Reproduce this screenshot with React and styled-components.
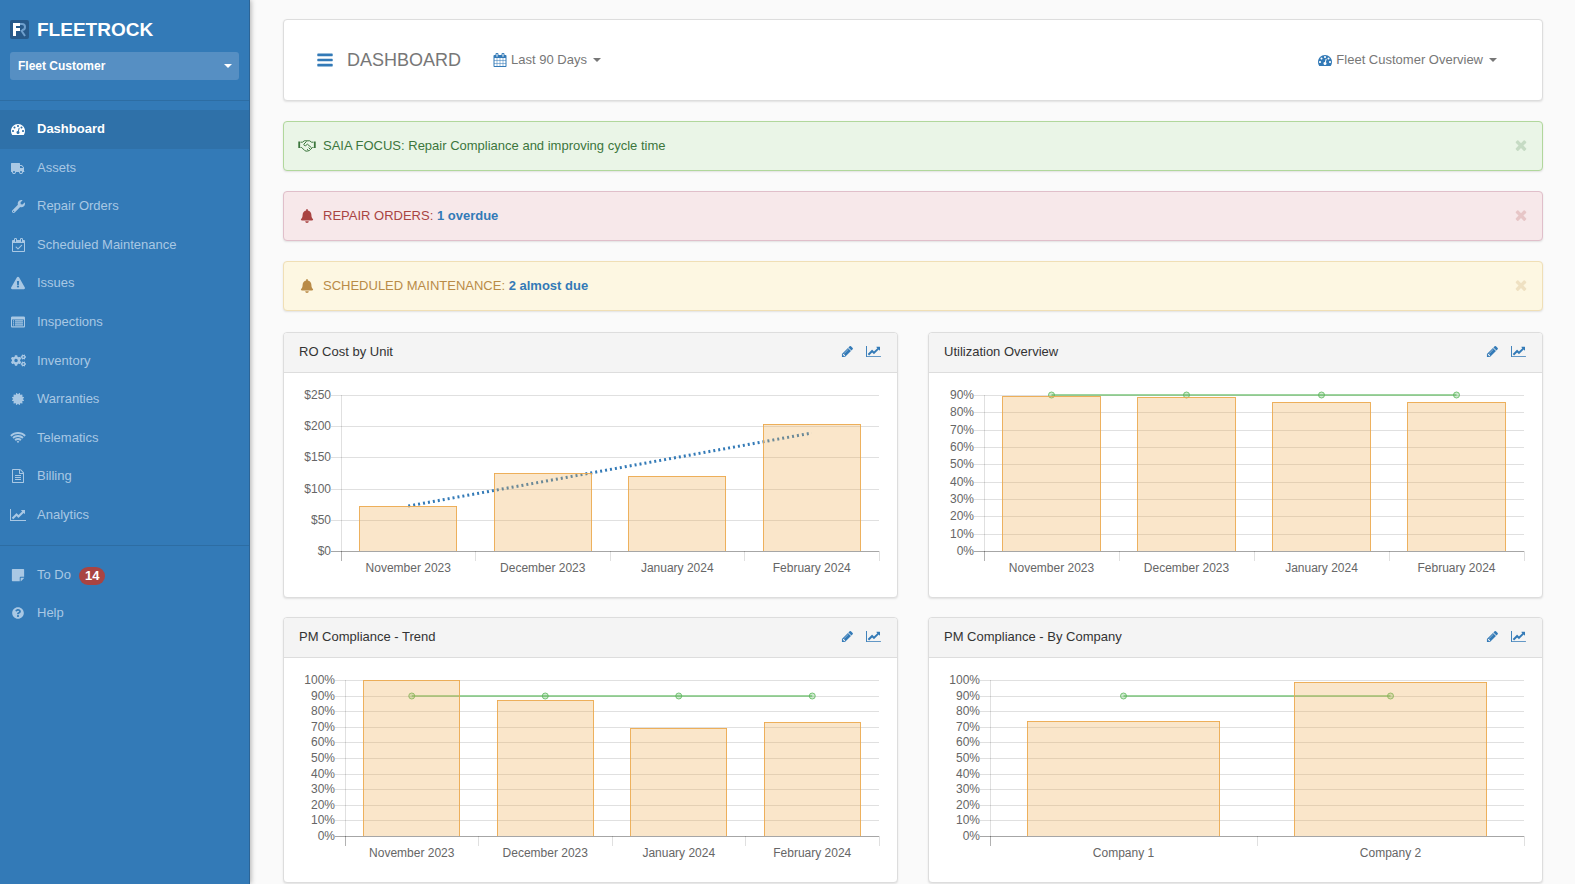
import React from "react";
import styled, { createGlobalStyle, css } from "styled-components";
import {
  FaWrench,
  FaExclamationTriangle,
  FaCogs,
  FaCertificate,
  FaStickyNote,
  FaQuestionCircle,
  FaBell,
} from "react-icons/fa";

const GlobalStyle = createGlobalStyle`
  *, *::before, *::after { box-sizing: border-box; }
  body {
    margin: 0;
    background: #fafafa;
    color: #333;
    font: 13px/18px "Liberation Sans", Arial, Helvetica, sans-serif;
  }
  button, select { font: inherit; }
  ul, h1, h2 { margin: 0; padding: 0; font-weight: normal; }
  ul { list-style: none; }
  a { text-decoration: none; }
`;

/* ---------- icons ---------- */

const PATHS = {
  bars: {
    w: 1792,
    d: "M1664 1344v128q0 26-19 45t-45 19h-1408q-26 0-45-19t-19-45v-128q0-26 19-45t45-19h1408q26 0 45 19t19 45zm0-512v128q0 26-19 45t-45 19h-1408q-26 0-45-19t-19-45v-128q0-26 19-45t45-19h1408q26 0 45 19t19 45zm0-512v128q0 26-19 45t-45 19h-1408q-26 0-45-19t-19-45v-128q0-26 19-45t45-19h1408q26 0 45 19t19 45z",
  },
  gauge: {
    w: 1792,
    d: "M384 1152q0-53-37.5-90.5t-90.5-37.5-90.5 37.5-37.5 90.5 37.5 90.5 90.5 37.5 90.5-37.5 37.5-90.5zm192-448q0-53-37.5-90.5t-90.5-37.5-90.5 37.5-37.5 90.5 37.5 90.5 90.5 37.5 90.5-37.5 37.5-90.5zm428 481l101-382q6-26-7.5-48.5t-38.5-29.5-48 6.5-30 39.5l-101 382q-60 5-107 43.5t-63 98.5q-20 77 20 146t117 89 146-20 89-117q16-60-6-117t-72-91zm660-33q0-53-37.5-90.5t-90.5-37.5-90.5 37.5-37.5 90.5 37.5 90.5 90.5 37.5 90.5-37.5 37.5-90.5zm-640-640q0-53-37.5-90.5t-90.5-37.5-90.5 37.5-37.5 90.5 37.5 90.5 90.5 37.5 90.5-37.5 37.5-90.5zm448 192q0-53-37.5-90.5t-90.5-37.5-90.5 37.5-37.5 90.5 37.5 90.5 90.5 37.5 90.5-37.5 37.5-90.5zm320 448q0 261-141 483-19 29-54 29h-1402q-35 0-54-29-141-221-141-483 0-182 71-348t191-286 286-191 348-71 348 71 286 191 191 286 71 348z",
  },
  truck: {
    w: 1792,
    flip: true,
    d: "M640 1408q0-52-38-90t-90-38-90 38-38 90 38 90 90 38 90-38 38-90zm-384-512h384v-256h-158q-13 0-22 9l-195 195q-9 9-9 22v30zm1280 512q0-52-38-90t-90-38-90 38-38 90 38 90 90 38 90-38 38-90zm256-1088v1024q0 15-4 26.5t-13.5 18.5-16.5 11.5-23.5 6-22.5 2-25.5 0-22.5-.5q0 106-75 181t-181 75-181-75-75-181h-384q0 106-75 181t-181 75-181-75-75-181h-64q-3 0-22.5.5t-25.5 0-22.5-2-23.5-6-16.5-11.5-13.5-18.5-4-26.5q0-26 19-45t45-19v-320q0-8-.5-35t0-38 2.5-34.5 6.5-37 14-30.5 22.5-30l198-198q19-19 50.5-32t58.5-13h160v-192q0-26 19-45t45-19h1024q26 0 45 19t19 45z",
  },
  calendarCheck: {
    w: 1664,
    d: "M1303 964l-512 512q-10 9-23 9t-23-9l-288-288q-9-10-9-23t9-22l46-46q9-9 22-9t23 9l220 220 444-444q10-9 23-9t22 9l46 46q9 9 9 22t-9 23zm-1175 700h1408v-1024h-1408v1024zm384-1216v-288q0-14-9-23t-23-9h-64q-14 0-23 9t-9 23v288q0 14 9 23t23 9h64q14 0 23-9t9-23zm768 0v-288q0-14-9-23t-23-9h-64q-14 0-23 9t-9 23v288q0 14 9 23t23 9h64q14 0 23-9t9-23zm384-64v1280q0 52-38 90t-90 38h-1408q-52 0-90-38t-38-90v-1280q0-52 38-90t90-38h128v-96q0-66 47-113t113-47h64q66 0 113 47t47 113v96h384v-96q0-66 47-113t113-47h64q66 0 113 47t47 113v96h128q52 0 90 38t38 90z",
  },
  calendar: {
    w: 1792,
    d: "M192 1664h288v-288h-288v288zm352 0h320v-288h-320v288zm-352-352h288v-320h-288v320zm352 0h320v-320h-320v320zm-352-384h288v-288h-288v288zm736 736h320v-288h-320v288zm-384-736h320v-288h-320v288zm768 736h288v-288h-288v288zm-384-352h320v-320h-320v320zm-352-864v-288q0-13-9.500-22.500t-22.500-9.500h-64q-13 0-22.500 9.500t-9.500 22.500v288q0 13 9.500 22.500t22.500 9.500h64q13 0 22.500-9.500t9.500-22.500zm736 864h288v-320h-288v320zm-384-384h320v-288h-320v288zm384 0h288v-288h-288v288zm32-480v-288q0-13-9.500-22.500t-22.500-9.500h-64q-13 0-22.500 9.500t-9.500 22.500v288q0 13 9.500 22.500t22.500 9.500h64q13 0 22.500-9.500t9.500-22.500zm384-64v1280q0 52-38 90t-90 38h-1408q-52 0-90-38t-38-90v-1280q0-52 38-90t90-38h128v-96q0-66 47-113t113-47h64q66 0 113 47t47 113v96h384v-96q0-66 47-113t113-47h64q66 0 113 47t47 113v96h128q52 0 90 38t38 90z",
  },
  list: {
    w: 1792,
    d: "M160 192h1472q66 0 113 47t47 113v1088q0 66-47 113t-113 47h-1472q-66 0-113-47t-47-113v-1088q0-66 47-113t113-47zm-32 384v832q0 32 32 32h1472q32 0 32-32v-832zm128 96h128v160h-128zm256 0h1024v160h-1024zm-256 256h128v160h-128zm256 0h1024v160h-1024zm-256 256h128v160h-128zm256 0h1024v160h-1024z",
    evenOdd: true,
  },
  wifi: {
    w: 2048,
    d: "M1024 1523q-20 0-93-73.5t-73-93.5q0-32 62.5-54t103.5-22 103.5 22 62.5 54q0 20-73 93.5t-93 73.5zm270-271q-2 0-40-25t-101.5-50-128.5-25-128.5 25-101 50-40.5 25q-18 0-93.5-75t-75.5-93q0-13 10-23 78-77 196-121t233-44 233 44 196 121q10 10 10 23 0 18-75.5 93t-93.5 75zm273-272q-11 0-23-8-136-105-252-154.5t-268-49.5q-85 0-170.5 22t-149 53-113.500 62-79 53-31 22q-17 0-92-75t-75-93q0-12 10-22 132-132 320-205t380-73 380 73 320 205q10 10 10 22 0 18-75 93t-92 75zm271-271q-11 0-22-9-179-157-371.500-236.500t-420.500-79.500-420.500 79.500-371.500 236.500q-11 9-22 9-17 0-92.500-75t-75.500-93q0-13 10-23 187-186 445-288t527-102 527 102 445 288q10 10 10 23 0 18-75.500 93t-92.500 75z",
  },
  file: {
    w: 1792,
    d: "M1596 380q28 28 48 76t20 88v1152q0 40-28 68t-68 28h-1344q-40 0-68-28t-28-68v-1600q0-40 28-68t68-28h896q40 0 88 20t76 48zm-444-244v376h376q-10-29-22-41l-313-313q-12-12-41-22zm384 1528v-1024h-416q-40 0-68-28t-28-68v-416h-768v1536h1280zm-1024-864q0-14 9-23t23-9h704q14 0 23 9t9 23v64q0 14-9 23t-23 9h-704q-14 0-23-9t-9-23v-64zm736 224q14 0 23 9t9 23v64q0 14-9 23t-23 9h-704q-14 0-23-9t-9-23v-64q0-14 9-23t23-9h704zm0 256q14 0 23 9t9 23v64q0 14-9 23t-23 9h-704q-14 0-23-9t-9-23v-64q0-14 9-23t23-9h704z",
  },
  lineChart: {
    w: 2048,
    d: "M2048 1536v128h-2048v-1536h128v1408h1920zm-128-1248v435q0 21-19.500 29.500t-35.500-7.500l-121-121-633 633q-10 10-23 10t-23-10l-233-233-416 416-192-192 585-585q10-10 23-10t23 10l233 233 464-464-121-121q-16-16-7.500-35.500t29.500-19.500h435q14 0 23 9t9 23z",
  },
  pencil: {
    w: 1792,
    d: "M491 1536l91-91-235-235-91 91v107h128v128h107zm523-928q0-22-22-22-10 0-17 7l-542 542q-7 7-7 17 0 22 22 22 10 0 17-7l542-542q7-7 7-17zm-54-192l416 416-832 832h-416v-416zm683 96q0 53-37 90l-166 166-416-416 166-165q36-38 90-38 53 0 91 38l235 234q37 39 37 91z",
  },
  close: {
    w: 1792,
    d: "M1490 1322q0 40-28 68l-136 136q-28 28-68 28t-68-28l-294-294-294 294q-28 28-68 28t-68-28l-136-136q-28-28-28-68t28-68l294-294-294-294q-28-28-28-68t28-68l136-136q28-28 68-28t68 28l294 294 294-294q28-28 68-28t68 28l136 136q28 28 28 68t-28 68l-294 294 294 294q28 28 28 68z",
  },
};

function Glyph({ name, size = 14 }) {
  const { w, d, flip, evenOdd } = PATHS[name];
  return (
    <svg
      viewBox={`0 0 ${w} 1792`}
      width={Math.round((size * w) / 1792)}
      height={size}
      fill="currentColor"
      aria-hidden="true"
    >
      <path
        d={d}
        fillRule={evenOdd ? "evenodd" : "nonzero"}
        transform={flip ? `translate(${w} 0) scale(-1 1)` : undefined}
      />
    </svg>
  );
}

function Handshake() {
  return (
    <svg width="18" height="12" viewBox="0 0 18 12" fill="none" stroke="currentColor" aria-hidden="true">
      <path d="M1.200 1.500v6.500M16.800 1.500v6.500" strokeWidth="1.800" />
      <path
        d="M2.500 2.200h2l1.800-1.400h5.400l1.800 1.400h2M2.500 7.500h1.200l3 3q1.400 1 2.600.6 2.600-.3 3.600-2l1.600-1.600h1M8.600 1.400l-2.800 2.800q0 1.700 1.800 1.500l1.800-1.500 4.200 3.600M9 9.200l1.300 1.200M10.600 7.600l1.600 1.600"
        strokeWidth="1"
        strokeLinejoin="round"
      />
    </svg>
  );
}

function Logo() {
  return (
    <svg width="19" height="19" viewBox="0 0 19 19" aria-hidden="true">
      <rect width="19" height="19" rx="2" fill="#27598a" />
      <g fill="none" stroke="#6f9fcd" strokeWidth="2">
        <path d="M8 4h4q3 0 3 3t-3 3" />
        <path d="M11 10l4 6" />
      </g>
      <g fill="#fff">
        <rect x="3" y="3" width="3" height="13" />
        <rect x="6" y="3" width="4" height="3" />
        <rect x="6" y="8" width="4" height="3" />
      </g>
    </svg>
  );
}

const Caret = styled.span`
  width: 0;
  height: 0;
  border: 4px solid transparent;
  border-top-color: currentColor;
  border-bottom-width: 0;
`;

/* ---------- sidebar ---------- */

const Page = styled.div`
  display: flex;
  min-height: 100vh;
`;

const Sidebar = styled.aside`
  flex: 0 0 250px;
  background: #337ab7;
  border-right: 1px solid #2c6496;
  box-shadow: 1px 0 5px rgba(0, 0, 0, 0.3);
`;

const Brand = styled.a`
  display: flex;
  align-items: center;
  gap: 8px;
  height: 52px;
  padding: 7px 10px 0;
  color: #fff;
  font-size: 19px;
  font-weight: bold;
`;

const CompanyPicker = styled.label`
  position: relative;
  display: block;
  margin: 0 10px 20px;
  color: #fff;
`;

const CompanySelect = styled.select`
  appearance: none;
  display: block;
  width: 100%;
  height: 28px;
  padding: 0 24px 0 8px;
  border: 0;
  border-radius: 3px;
  background: #568fc3;
  color: #fff;
  font-size: 12px;
  font-weight: bold;
`;

const PickerCaret = styled(Caret)`
  position: absolute;
  right: 7px;
  top: 12px;
  pointer-events: none;
`;

const NavGroup = styled.ul`
  display: flex;
  flex-direction: column;
  min-height: ${(p) => p.$height}px;
  padding: 9px 0 11px;
  border-top: 1px solid #2d6da3;
`;

const NavItem = styled.li`
  flex: 1;
  display: flex;
`;

const NavLink = styled.a`
  flex: 1;
  display: flex;
  align-items: center;
  padding-left: 10px;
  color: #a9c8e4;
  ${(p) =>
    p.$active &&
    css`
      background: #2f71a9;
      color: #fff;
      font-weight: bold;
    `}
`;

const NavIcon = styled.span`
  display: flex;
  justify-content: center;
  width: 16px;
  margin-right: 11px;
`;

const Badge = styled.span`
  margin: 2px 0 0 8px;
  padding: 0 6px;
  border-radius: 9px;
  background: #a94442;
  color: #fff;
  font-weight: bold;
`;

const MAIN_NAV = [
  ["Dashboard", <Glyph name="gauge" />],
  ["Assets", <Glyph name="truck" />],
  ["Repair Orders", <FaWrench size={13} />],
  ["Scheduled Maintenance", <Glyph name="calendarCheck" />],
  ["Issues", <FaExclamationTriangle size={14} />],
  ["Inspections", <Glyph name="list" />],
  ["Inventory", <FaCogs size={15} />],
  ["Warranties", <FaCertificate size={12} />],
  ["Telematics", <Glyph name="wifi" />],
  ["Billing", <Glyph name="file" />],
  ["Analytics", <Glyph name="lineChart" />],
];

const HELP_NAV = [
  ["To Do", <FaStickyNote size={14} />, 14],
  ["Help", <FaQuestionCircle size={12} />],
];

function Nav({ items, active, height }) {
  return (
    <NavGroup $height={height}>
      {items.map(([label, icon, count]) => (
        <NavItem key={label}>
          <NavLink href="#" $active={label === active}>
            <NavIcon>{icon}</NavIcon>
            {label}
            {count && <Badge>{count}</Badge>}
          </NavLink>
        </NavItem>
      ))}
    </NavGroup>
  );
}

/* ---------- main column ---------- */

const Main = styled.main`
  flex: 1;
  min-width: 0;
  padding: 19px 32px 0 33px;
`;

const TopBar = styled.header`
  display: flex;
  align-items: center;
  height: 82px;
  margin-bottom: 20px;
  padding: 0 45px 0 32px;
  background: #fff;
  border: 1px solid #ddd;
  border-radius: 4px;
  box-shadow: 0 1px 2px rgba(0, 0, 0, 0.1);
`;

const IconButton = styled.button`
  display: flex;
  padding: 0;
  border: 0;
  background: none;
  color: #337ab7;
  cursor: pointer;
`;

const Title = styled.h1`
  margin: 0 32px 0 13px;
  color: #777;
  font-size: 18px;
`;

const Dropdown = styled.button`
  display: flex;
  align-items: center;
  gap: 4px;
  padding: 0;
  border: 0;
  background: none;
  color: #777;
  cursor: pointer;
  margin-left: ${(p) => (p.$end ? "auto" : "0")};

  svg {
    color: #337ab7;
  }

  ${Caret} {
    margin-left: 2px;
  }
`;

const TONES = {
  success: { bg: "#eaf5e7", line: "#b1d79c", text: "#3c763d" },
  danger: { bg: "#f7e8ea", line: "#e0bfca", text: "#a94442" },
  warning: { bg: "#fdf7e2", line: "#f0dfb6", text: "#b98b47" },
};

const Alert = styled.div`
  display: flex;
  align-items: center;
  height: 50px;
  margin-bottom: 20px;
  padding: 0 13px 0 14px;
  background: ${(p) => TONES[p.$tone].bg};
  border: 1px solid ${(p) => TONES[p.$tone].line};
  border-radius: 4px;
  box-shadow: 0 1px 2px rgba(0, 0, 0, 0.1);
  color: ${(p) => TONES[p.$tone].text};
`;

const AlertIcon = styled.span`
  display: flex;
  justify-content: center;
  width: 18px;
  margin-right: 7px;
`;

const AlertText = styled.span`
  flex: 1;
`;

const AlertLink = styled.a`
  color: #337ab7;
  font-weight: bold;
`;

const Dismiss = styled(IconButton)`
  padding-bottom: 2px;
  color: inherit;
  opacity: 0.2;
`;

const Cards = styled.div`
  display: grid;
  grid-template-columns: repeat(2, minmax(0, 1fr));
  gap: 19px 30px;
  padding-top: 1px;
`;

const Card = styled.section`
  background: #fff;
  border: 1px solid #ddd;
  border-radius: 4px;
  box-shadow: 0 1px 2px rgba(0, 0, 0, 0.1);
`;

const CardHead = styled.div`
  display: flex;
  align-items: center;
  gap: 12px;
  height: 40px;
  padding: 0 16px 2px 15px;
  background: #f4f4f4;
  border-bottom: 1px solid #ddd;
  border-radius: 3px 3px 0 0;
`;

const CardTitle = styled.h2`
  flex: 1;
  font-size: 13px;
`;

/* ---------- charts ---------- */

const PLOT_HEIGHT = 156;

const ChartBody = styled.div`
  height: 224px;
  padding: 22px 18px 0 ${(p) => p.$axis}px;
`;

const Plot = styled.svg`
  display: block;
  width: 100%;
  height: ${PLOT_HEIGHT}px;
  overflow: visible;

  text {
    fill: #666;
    font-size: 12px;
  }
`;

function Chart({ chart }) {
  const { labels, values, max, step, format, target, trend, axis } = chart;
  const y = (v) => Math.round(PLOT_HEIGHT * (1 - v / max));
  const slot = 100 / labels.length;
  const mid = (i) => `${slot * (i + 0.5)}%`;
  const ticks = [];
  for (let v = 0; v <= max; v += step) ticks.push(v);

  return (
    <ChartBody $axis={axis}>
      <Plot role="img" aria-label={chart.title}>
        <g shapeRendering="crispEdges" stroke="#000" strokeOpacity="0.12">
          {ticks.map((v) => (
            <line key={v} x1="-10" x2="100%" y1={y(v)} y2={y(v)} strokeOpacity={v === 0 ? 0.35 : 0.12} />
          ))}
          <line x1="0" x2="0" y1="0" y2={PLOT_HEIGHT} />
          <line x1="0" x2="0" y1={PLOT_HEIGHT} y2={PLOT_HEIGHT + 10} strokeOpacity="0.3" />
          {labels.map((l, i) => (
            <line key={l} x1={`${slot * (i + 1)}%`} x2={`${slot * (i + 1)}%`} y1={PLOT_HEIGHT} y2={PLOT_HEIGHT + 10} />
          ))}
        </g>
        {target && (
          <g stroke="#5cb85c" strokeOpacity="0.8">
            <line x1={mid(0)} x2={mid(labels.length - 1)} y1={y(target)} y2={y(target)} strokeWidth="1.500" />
            {labels.map((l, i) => (
              <circle key={l} cx={mid(i)} cy={y(target)} r="3" fill="#5cb85c" fillOpacity="0.3" />
            ))}
          </g>
        )}
        {trend && (
          <line
            x1={mid(0)}
            x2={mid(labels.length - 1)}
            y1={y(trend[0])}
            y2={y(trend[1])}
            stroke="#337ab7"
            strokeWidth="3"
            strokeDasharray="2 3"
          />
        )}
        {values.map((v, i) => {
          const left = `${slot * (i + 0.14)}%`;
          const right = `${slot * (i + 0.86)}%`;
          return (
            <g key={labels[i]} stroke="#eba94e" strokeOpacity="0.9">
              <rect
                x={left}
                y={y(v)}
                width={`${slot * 0.72}%`}
                height={PLOT_HEIGHT - y(v)}
                fill="#f0ad4e"
                fillOpacity="0.3"
                stroke="none"
              />
              <g shapeRendering="crispEdges">
                <line x1={left} x2={left} y1={y(v)} y2={PLOT_HEIGHT} />
                <line x1={right} x2={right} y1={y(v)} y2={PLOT_HEIGHT} />
                <line x1={left} x2={right} y1={y(v)} y2={y(v)} />
              </g>
            </g>
          );
        })}
        {ticks.map((v) => (
          <text key={v} x="-10" y={y(v) + 4} textAnchor="end">
            {format(v)}
          </text>
        ))}
        {labels.map((l, i) => (
          <text key={l} x={mid(i)} y={PLOT_HEIGHT + 21} textAnchor="middle">
            {l}
          </text>
        ))}
      </Plot>
    </ChartBody>
  );
}

const MONTHS = ["November 2023", "December 2023", "January 2024", "February 2024"];
const percent = (v) => `${v}%`;

const CHARTS = [
  {
    title: "RO Cost by Unit",
    labels: MONTHS,
    values: [72, 125, 120, 204],
    trend: [72, 189],
    max: 250,
    step: 50,
    format: (v) => `$${v}`,
    axis: 57,
  },
  {
    title: "Utilization Overview",
    labels: MONTHS,
    values: [89.4, 89, 86, 86.2],
    target: 90,
    max: 90,
    step: 10,
    format: percent,
    axis: 55,
  },
  {
    title: "PM Compliance - Trend",
    labels: MONTHS,
    values: [100, 87.4, 69.3, 73],
    target: 90,
    max: 100,
    step: 10,
    format: percent,
    axis: 61,
  },
  {
    title: "PM Compliance - By Company",
    labels: ["Company 1", "Company 2"],
    values: [74, 98.8],
    target: 90,
    max: 100,
    step: 10,
    format: percent,
    axis: 61,
  },
];

export default function App() {
  return (
    <Page>
      <GlobalStyle />
      <Sidebar>
        <Brand href="#">
          <Logo />
          FLEETROCK
        </Brand>
        <CompanyPicker>
          <CompanySelect aria-label="Company" defaultValue="Fleet Customer">
            <option>Fleet Customer</option>
          </CompanySelect>
          <PickerCaret />
        </CompanyPicker>
        <nav>
          <Nav items={MAIN_NAV} active="Dashboard" height={445} />
          <Nav items={HELP_NAV} height={98} />
        </nav>
      </Sidebar>
      <Main>
        <TopBar>
          <IconButton type="button" aria-label="Toggle menu">
            <Glyph name="bars" size={18} />
          </IconButton>
          <Title>DASHBOARD</Title>
          <Dropdown type="button">
            <Glyph name="calendar" />
            Last 90 Days
            <Caret />
          </Dropdown>
          <Dropdown type="button" $end>
            <Glyph name="gauge" />
            Fleet Customer Overview
            <Caret />
          </Dropdown>
        </TopBar>

        <Alert $tone="success">
          <AlertIcon><Handshake /></AlertIcon>
          <AlertText>SAIA FOCUS: Repair Compliance and improving cycle time</AlertText>
          <Dismiss type="button" aria-label="Dismiss"><Glyph name="close" size={16} /></Dismiss>
        </Alert>
        <Alert $tone="danger">
          <AlertIcon><FaBell size={14} /></AlertIcon>
          <AlertText>REPAIR ORDERS: <AlertLink href="#">1 overdue</AlertLink></AlertText>
          <Dismiss type="button" aria-label="Dismiss"><Glyph name="close" size={16} /></Dismiss>
        </Alert>
        <Alert $tone="warning">
          <AlertIcon><FaBell size={14} /></AlertIcon>
          <AlertText>SCHEDULED MAINTENANCE: <AlertLink href="#">2 almost due</AlertLink></AlertText>
          <Dismiss type="button" aria-label="Dismiss"><Glyph name="close" size={16} /></Dismiss>
        </Alert>

        <Cards>
          {CHARTS.map((chart) => (
            <Card key={chart.title}>
              <CardHead>
                <CardTitle>{chart.title}</CardTitle>
                <IconButton type="button" aria-label="Edit">
                  <Glyph name="pencil" size={13} />
                </IconButton>
                <IconButton type="button" aria-label="Open chart">
                  <Glyph name="lineChart" size={13} />
                </IconButton>
              </CardHead>
              <Chart chart={chart} />
            </Card>
          ))}
        </Cards>
      </Main>
    </Page>
  );
}
